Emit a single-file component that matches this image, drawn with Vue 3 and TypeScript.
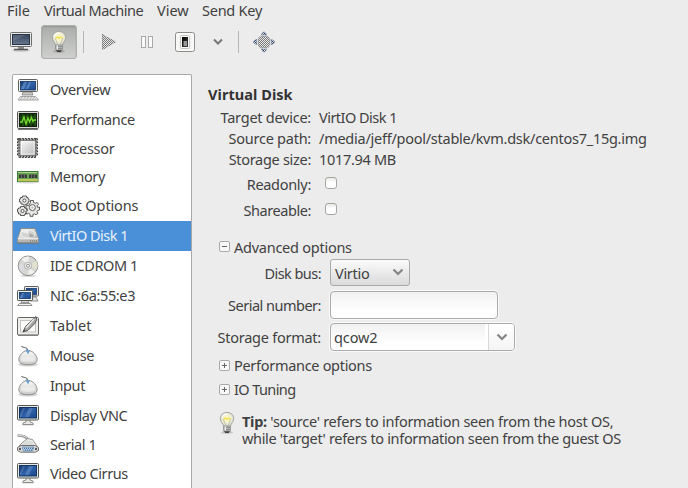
<script setup lang="ts">
import { ref } from 'vue'

interface Device {
  label: string
  icon: string
  height: number
  track: number
}

const menus = [
  { label: 'File', cls: 'file' },
  { label: 'Virtual Machine', cls: 'machine' },
  { label: 'View', cls: 'view' },
  { label: 'Send Key', cls: 'send' },
]

const devices: Device[] = [
  { label: 'Overview', icon: 'computer', height: 30, track: -0.37 },
  { label: 'Performance', icon: 'graph', height: 29, track: -0.32 },
  { label: 'Processor', icon: 'cpu', height: 29, track: -0.3 },
  { label: 'Memory', icon: 'memory', height: 28, track: -0.33 },
  { label: 'Boot Options', icon: 'gears', height: 30, track: -0.12 },
  { label: 'VirtIO Disk 1', icon: 'disk', height: 30, track: -0.52 },
  { label: 'IDE CDROM 1', icon: 'cd', height: 30, track: -0.43 },
  { label: 'NIC :6a:55:e3', icon: 'nic', height: 30, track: -0.38 },
  { label: 'Tablet', icon: 'tablet', height: 30, track: 0.08 },
  { label: 'Mouse', icon: 'mouse', height: 30, track: -0.4 },
  { label: 'Input', icon: 'mouse', height: 30, track: -0.4 },
  { label: 'Display VNC', icon: 'display', height: 29, track: -0.45 },
  { label: 'Serial 1', icon: 'serial', height: 29, track: -0.44 },
  { label: 'Video Cirrus', icon: 'display', height: 30, track: -0.42 },
]

const selected = ref(5)
const readonlyDisk = ref(false)
const shareable = ref(false)
const serial = ref('')
const teeth = [4, 7, 10, 13, 16, 19]
const memoryPins = [3, 5, 7, 9, 11, 13, 15, 17, 19, 21]
</script>

<template>
  <div class="window">
    <svg class="defs" width="0" height="0">
      <defs>
        <linearGradient id="screenBlue" x1="0" y1="0" x2="1" y2="1">
          <stop offset="0" stop-color="#12386f" /><stop offset=".5" stop-color="#2f62ab" /><stop offset="1" stop-color="#1a4687" />
        </linearGradient>
        <linearGradient id="screenDark" x1="0" y1="0" x2="0" y2="1">
          <stop offset="0" stop-color="#35435a" /><stop offset="1" stop-color="#68788f" />
        </linearGradient>
        <linearGradient id="silver" x1="0" y1="0" x2="1" y2="1">
          <stop offset="0" stop-color="#fafafa" /><stop offset="1" stop-color="#b9b9b9" />
        </linearGradient>
        <linearGradient id="metal" x1="0" y1="0" x2="0" y2="1">
          <stop offset="0" stop-color="#fbfbfb" /><stop offset="1" stop-color="#c8c8c6" />
        </linearGradient>
        <linearGradient id="slot" x1="0" y1="0" x2="1" y2="1">
          <stop offset="0" stop-color="#000" /><stop offset="1" stop-color="#444" />
        </linearGradient>
        <radialGradient id="glow" cx=".5" cy=".45" r=".5">
          <stop offset="0" stop-color="#fffbb0" /><stop offset=".55" stop-color="#f4f3d4" /><stop offset="1" stop-color="#d9dad6" />
        </radialGradient>
        <pattern id="dither" width="2" height="2" patternUnits="userSpaceOnUse">
          <rect width="1" height="1" fill="#777" /><rect x="1" y="1" width="1" height="1" fill="#777" />
        </pattern>
        <pattern id="ditherBlue" width="2" height="2" patternUnits="userSpaceOnUse">
          <rect width="1" height="1" fill="#23395c" /><rect x="1" y="1" width="1" height="1" fill="#23395c" />
        </pattern>
        <symbol id="bulb" viewBox="0 0 18 24">
          <ellipse cx="9" cy="21.4" rx="6" ry="1.6" fill="#000" opacity=".16" />
          <path d="M9 1.4c4.100 0 6.700 2.800 6.700 6.200 0 3.200-2.700 4.700-3.300 7.700H5.600C5 12.300 2.300 10.800 2.300 7.600c0-3.400 2.600-6.200 6.700-6.200z" fill="url(#glow)" stroke="#a3a5a0" stroke-width="1" />
          <path d="M7.700 14 5.400 8.500l1.800-1.300 1.800 1.100 1.800-1.100 1.800 1.300-2.300 5.500" fill="none" stroke="#bbb897" stroke-width=".8" />
          <path d="M5.500 8.100 7.300 7.100 9 8.200l1.700-1.100 1.800 1" fill="none" stroke="#f4e25a" stroke-width="1.500" />
          <path d="M4.300 6.300C5 4 6.700 3 9 3" fill="none" stroke="#fff" stroke-width="1.200" />
          <rect x="5.500" y="15" width="7" height="5" rx=".8" fill="#b9bbb8" stroke="#898b87" stroke-width=".8" />
          <path d="M6 16.600h6M6 18.600h6" stroke="#777" stroke-width=".7" />
          <path d="M7.300 15.500v4" stroke="#f8f8f8" stroke-width="1.300" />
          <path d="M6 20.200h6l-1.300 1.900H7.300z" fill="#3d3f3e" />
        </symbol>
      </defs>
    </svg>

    <nav class="menubar">
      <span v-for="m in menus" :key="m.label" :class="['menu', m.cls]">{{ m.label }}</span>
    </nav>

    <div class="toolbar">
      <button class="tool console" aria-label="Console">
        <svg width="24" height="22" viewBox="0 0 24 22">
          <ellipse cx="12" cy="19.500" rx="9" ry="1.400" fill="#000" opacity=".14" />
          <rect x="1.500" y="1.500" width="21" height="14" rx="1" fill="#e9e9e7" stroke="#6b6e6b" />
          <rect x="3.500" y="3.500" width="17" height="10" fill="url(#screenDark)" stroke="#283346" />
          <path d="M4 4h13L4 10z" fill="#fff" opacity=".15" />
          <path d="M9 16h6v2H9z" fill="#8a8c88" />
          <path d="M5.500 18.500h13" stroke="#555753" stroke-width="1.400" stroke-linecap="round" />
        </svg>
      </button>
      <button class="tool active" aria-label="Details">
        <svg width="18" height="24"><use href="#bulb" /></svg>
      </button>
      <i class="separator first"></i>
      <button class="tool play" aria-label="Run">
        <svg width="16" height="18" viewBox="0 0 16 18" shape-rendering="crispEdges">
          <path d="M1 1 15 9 1 17z" fill="url(#dither)" />
          <path d="M1.500 1.500v15L14.500 9z" fill="none" stroke="#888" stroke-width=".7" opacity=".65" shape-rendering="auto" />
        </svg>
      </button>
      <button class="tool pause" aria-label="Pause">
        <svg width="14" height="14" viewBox="0 0 14 14">
          <rect x="1.500" y="1.500" width="4" height="11" fill="#fafafa" stroke="#a8aaa7" />
          <rect x="8.500" y="1.500" width="4" height="11" fill="#fafafa" stroke="#a8aaa7" />
        </svg>
      </button>
      <button class="tool power" aria-label="Shut down">
        <svg width="22" height="22" viewBox="0 0 22 22">
          <rect x="1.500" y="1.500" width="19" height="19" rx="2" fill="#f4f4f3" stroke="#8c8e8a" />
          <rect x="3" y="3" width="16" height="16" rx="1" fill="none" stroke="#fff" />
          <rect x="6.500" y="4.500" width="9" height="13" rx="1" fill="#f8f8f8" stroke="#c4c5c3" />
          <rect x="8" y="6" width="6" height="10" fill="url(#slot)" />
          <rect x="9.500" y="10" width="3.500" height="5" fill="#999" />
        </svg>
      </button>
      <button class="tool drop" aria-label="Shut down options">
        <svg width="10" height="8" viewBox="0 0 10 8"><path d="m1 1.500 4 4 4-4" fill="none" stroke="#777" stroke-width="2" /></svg>
      </button>
      <i class="separator second"></i>
      <button class="tool full" aria-label="Fullscreen">
        <svg width="24" height="22" viewBox="0 0 24 22">
          <rect x="6" y="5" width="12" height="12" rx="4" fill="url(#dither)" />
          <rect x="6.500" y="5.500" width="11" height="11" rx="3.500" fill="none" stroke="#999" stroke-width=".6" />
          <g fill="url(#ditherBlue)" stroke="#6f7f98" stroke-width=".7">
            <path d="M9.500 4.200Q9.300 2.500 12 .800q2.700 1.700 2.500 3.400-2.500-1-5 0z" />
            <path d="M9.500 17.800q-.2 1.700 2.500 3.400 2.700-1.700 2.500-3.400-2.500 1-5 0z" />
            <path d="M5 8.500Q3 8.300 1.200 11q1.800 2.700 3.800 2.500-1-2.500 0-5z" />
            <path d="M19 8.500q2-.2 3.800 2.500-1.800 2.700-3.800 2.500 1-2.500 0-5z" />
          </g>
        </svg>
      </button>
    </div>

    <div class="body">
      <ul class="devices">
        <li
          v-for="(d, i) in devices"
          :key="d.label"
          :class="{ selected: i === selected }"
          :style="{ height: d.height + 'px' }"
          @click="selected = i"
        >
          <svg class="icon" width="24" height="24" viewBox="0 0 24 24">
            <g v-if="d.icon === 'computer'">
              <path d="M7 14h9l1 3H6z" fill="#c9cac7" stroke="#737571" stroke-width=".7" />
              <rect x="2.500" y="1.500" width="19" height="12" rx="1" fill="#efefed" stroke="#60625f" />
              <rect x="4.500" y="3.500" width="15" height="8.500" fill="url(#screenBlue)" stroke="#123462" stroke-width=".8" />
              <path d="M8 4h3l-3 7H5zM13 4h2l-3 7h-2z" fill="#9bbde5" opacity=".4" />
              <path d="M4.500 18.500h15l3 3.500H2z" fill="#f3f3f2" stroke="#8c8e8b" stroke-width=".8" />
              <path d="M5 19.800h14M4 21h16" stroke="#9b9c99" stroke-width=".7" stroke-dasharray="2 1" />
            </g>
            <g v-else-if="d.icon === 'graph'">
              <path d="M2 21.500h20" stroke="#777" stroke-width="1" />
              <rect x="1.500" y="3.500" width="21" height="17" rx="1" fill="#d8d9d6" stroke="#555753" />
              <rect x="3.500" y="5.500" width="17" height="13" fill="#102d09" stroke="#141c12" />
              <path d="M4 9h16M4 12h16M4 15h16M7 6v12M11 6v12M15 6v12M19 6v12" stroke="#2f6e1d" stroke-width=".8" />
              <path d="M4 14h2l2-5 2 7 2-6 1.500 4 2-4.500 1.500 4 1-1.500h2" fill="none" stroke="#76dc2e" stroke-width="1.300" />
            </g>
            <g v-else-if="d.icon === 'cpu'">
              <g fill="none" stroke="#3e403d" stroke-width="1">
                <path v-for="t in teeth" :key="'v' + t" :d="`M${t - 1} 4V1.500h1.500V4M${t - 1} 18v2.500h1.500V18`" />
                <path v-for="t in teeth" :key="'h' + t" :d="`M4.500 ${t - 1}H1.500v-1.300h3M19 ${t - 1}h2.500v-1.300H19`" />
              </g>
              <rect x="4" y="3.500" width="15.500" height="15" rx=".7" fill="url(#silver)" stroke="#70726f" stroke-width=".8" />
              <rect x="5.500" y="5" width="12.500" height="12" fill="none" stroke="#fff" stroke-width=".6" />
            </g>
            <g v-else-if="d.icon === 'memory'">
              <ellipse cx="12" cy="17.500" rx="11" ry="1" fill="#000" opacity=".15" />
              <rect x="1.500" y="6.500" width="20.500" height="10" fill="#6aa456" stroke="#3d7a38" />
              <path d="M2 7.500h19" stroke="#a5cf8d" />
              <path d="M3 9.500h8v3.500H3zM13 9.500h8v3.500h-8z" fill="#3b3d3b" />
              <path d="M5.500 9.500V13M8.500 9.500V13M15.500 9.500V13M18.500 9.500V13" stroke="#767976" stroke-width=".7" />
              <path v-for="p in memoryPins" :key="p" :d="`M${p} 14v2.500`" stroke="#f6df62" stroke-width="1.200" />
            </g>
            <g v-else-if="d.icon === 'gears'">
              <g fill="#e8e8e6" stroke="#484a48" stroke-width=".9">
                <path d="M4.500 3.500h2V2h4v1.500h1.500V5h1v3h-1v2h-2v1h-3v-1h-2V8H3.500V5h1z" />
                <path d="M2.500 14h2v-1.500h4V14h1.500v1h1v4h-1.500v1.500h-1v1h-4v-1.500h-2V18h-1v-3h1z" />
                <path d="M14.500 8.500V6.500h3v2l2 .800 1.500-1 1.500 2-1.500 1.500.500 1.500 2-.300v3l-2 .500-.500 1 1 1.800-2 1.500-1.600-1-1.400.500v2h-3v-2l-1.500-1-1.800.8-1-2.500 1.700-1-.2-2-1.700-1.200 1-2 2 .4z" />
              </g>
              <circle v-for="(c, n) in [[8.400, 6.500, 1.600], [6.500, 17, 1.600], [16.400, 13.600, 3]]" :key="n" :cx="c[0]" :cy="c[1]" :r="c[2]" fill="#fff" stroke="#555" stroke-width="1" />
              <circle cx="16.400" cy="13.600" r="1.200" fill="#b5b5b3" />
            </g>
            <g v-else-if="d.icon === 'disk'">
              <path d="M5 4.500h14l3.500 10v4.500h-21v-4.500z" fill="#dededc" stroke="#888a86" stroke-width=".9" />
              <path d="M5.800 5.300h12.500l3 9H2.700z" fill="url(#silver)" />
              <ellipse cx="12" cy="10" rx="7.200" ry="4" fill="#d3d4d2" stroke="#efefef" stroke-width=".9" />
              <path d="M12 10 6 8q3-2.500 7-2z" fill="#f4f4f4" opacity=".8" />
              <path d="m13 9.500 5 1.500-1 2-3 .5" fill="#a8aaa8" />
              <path d="M1.900 14.800h20.200v3.900H1.900z" fill="#b4b5b3" />
              <path d="M2 14.800h20" stroke="#f6f6f5" />
              <path d="M14 17h7" stroke="#7b7d7a" stroke-width="1.600" stroke-dasharray="1 1" />
              <path d="M1.500 19h21" stroke="#6b6d69" />
            </g>
            <g v-else-if="d.icon === 'cd'">
              <ellipse cx="12" cy="21.800" rx="8" ry="1.300" fill="#000" opacity=".15" />
              <circle cx="12" cy="11.800" r="9.800" fill="#d6d7d4" stroke="#868884" stroke-width=".9" />
              <path d="M12 11.800 5.500 5A9 9 0 0 1 13 2.500zM12 11.800l6.500 6.500a9 9 0 0 1-6 2.500z" fill="#f0f0ee" />
              <path d="M12 11.800 20.500 7a9 9 0 0 1 .3 8z" fill="#e2e1cf" />
              <path d="M12 11.800 3 10a9 9 0 0 0 2 7.500z" fill="#dcdbe2" />
              <circle cx="12" cy="11.800" r="3.600" fill="#ededeb" stroke="#a1a39f" stroke-width=".8" />
              <circle cx="12" cy="11.800" r="1.500" fill="#fff" stroke="#858783" stroke-width=".9" />
            </g>
            <g v-else-if="d.icon === 'nic'">
              <path d="M15 13h5l2 4h-8z" fill="#e3e4e1" stroke="#777" stroke-width=".8" />
              <rect x="8.500" y="2.500" width="14" height="9.500" rx=".7" fill="#eee" stroke="#5b5d5a" />
              <rect x="10.500" y="4.500" width="10" height="6" fill="url(#screenBlue)" stroke="#14386b" stroke-width=".8" />
              <path d="M6 16h6l1 2.500H5z" fill="#d4d5d2" stroke="#777" stroke-width=".7" />
              <rect x="1.500" y="6.500" width="15" height="10" rx=".7" fill="#f0f0ee" stroke="#555753" />
              <rect x="3.500" y="8.500" width="11" height="6" fill="url(#screenBlue)" stroke="#14386b" stroke-width=".8" />
              <path d="M6 9h2l-2 5H4z" fill="#8fb1dd" opacity=".5" />
              <path d="M3.500 19.500h11l1.500 2H1.500z" fill="#f3f3f2" stroke="#777975" stroke-width=".8" />
            </g>
            <g v-else-if="d.icon === 'tablet'">
              <rect x="1.500" y="3.500" width="21" height="17.500" rx="1" fill="#eeeeec" stroke="#646662" />
              <rect x="4.500" y="6.500" width="15" height="11.500" fill="#fafafa" stroke="#c3c4c1" />
              <path d="M2 21.300h20" stroke="#747672" />
              <path d="M7 18 9.500 12.500 17.500 4.500l2.500-2 .8 3-2 4-7 7z" fill="#a4a6a3" stroke="#4f514f" stroke-width=".9" />
              <path d="m10 14 8-9" stroke="#ececea" stroke-width="1.400" />
              <path d="M7 18l2-1.500-1-1z" fill="#222" />
            </g>
            <g v-else-if="d.icon === 'mouse'">
              <ellipse cx="12" cy="20.500" rx="10" ry="2" fill="#000" opacity=".16" />
              <path d="M5.500 2c1.500 2.500 5.500.500 6 3.500v2" fill="none" stroke="#767874" stroke-width="1.200" />
              <path d="M12 6.500c4 0 6.500 2.500 8.300 5.700 1.700 3.500.7 6.400-2.300 7.700-3 1.200-9 1.200-12 0-3-1.300-4-4.200-2.300-7.700C5.500 9 8 6.500 12 6.500z" fill="url(#metal)" stroke="#858783" stroke-width=".9" />
              <path d="M3.500 14.500c5-2.500 12-2.500 17 0" fill="none" stroke="#c4c5c1" stroke-width=".7" />
              <path d="M5 13.300c4-2 10-2 14 0 .8 3-1 4.600-7 4.600S4.200 16.300 5 13.300z" fill="#fff" opacity=".45" />
              <path d="M10 5.500 12 8.700l1.500-2.700" fill="none" stroke="#6b9fd4" stroke-width="1.500" />
            </g>
            <g v-else-if="d.icon === 'display'">
              <ellipse cx="12" cy="20.700" rx="7" ry="1" fill="#000" opacity=".13" />
              <path d="M10 15h4v3l3 1v1.500H7V19l3-1z" fill="#e8e9e6" stroke="#777975" stroke-width=".8" />
              <rect x="1.500" y="1.500" width="21" height="14.500" rx="1" fill="#e8e9e6" stroke="#555753" />
              <rect x="3.500" y="3.500" width="17" height="10.500" fill="url(#screenBlue)" stroke="#123462" />
              <path d="M13 4h4l-4 9H9zM7 4h2l-4 9H4v-2z" fill="#aac8ea" opacity=".25" />
            </g>
            <g v-else>
              <path d="M1.500 2.500c6 0 8 1 11.500 5" fill="none" stroke="#969895" stroke-width="2.500" />
              <path d="M1.500 2.300c6 0 8 1 11.500 5" fill="none" stroke="#e4e4e2" stroke-width="1" />
              <path d="m7 9 4.500-3.500 5 1L21 13v4H3v-4z" fill="#ededeb" stroke="#777975" stroke-width=".8" />
              <path d="m7 10 4-2.500 5 1 2.500 3.500H5z" fill="#dcdddb" />
              <path d="M5 12.500h14l3.500 2v3l-3 1.700H4.500l-3-1.700v-3z" fill="#e0e1de" stroke="#60625f" stroke-width=".9" />
              <path d="M6 14h12l-1.500 4h-9z" fill="#b7d1ee" stroke="#597da5" stroke-width=".7" />
              <path d="M8 15.300h9M9 17h7" stroke="#315982" stroke-width="1" stroke-dasharray="1 1" />
              <circle cx="4" cy="16" r="1.200" fill="#555" /><circle cx="20" cy="16" r="1.200" fill="#555" />
            </g>
          </svg>
          <span :style="{ letterSpacing: d.track + 'px' }">{{ d.label }}</span>
        </li>
      </ul>

      <main class="details">
        <h1><span>Virtual Disk</span></h1>
        <dl class="facts">
          <dt class="t-target">Target device:</dt><dd class="v-target">VirtIO Disk 1</dd>
          <dt class="t-source">Source path:</dt><dd class="v-source">/media/jeff/pool/stable/kvm.dsk/centos7_15g.img</dd>
          <dt class="t-size">Storage size:</dt><dd class="v-size">1017.94 MB</dd>
          <dt class="t-ro">Readonly:</dt><dd><input v-model="readonlyDisk" type="checkbox" class="check" /></dd>
          <dt class="t-share">Shareable:</dt><dd><input v-model="shareable" type="checkbox" class="check" /></dd>
        </dl>

        <div class="expander advanced">
          <svg width="11" height="11" viewBox="0 0 11 11"><rect x=".5" y=".5" width="10" height="10" rx="1.500" fill="#f8f8f8" stroke="#aaa" /><path d="M3 5.500h5" stroke="#666" /></svg>
          <span class="x-adv">Advanced options</span>
        </div>
        <div class="form">
          <label class="f-bus">Disk bus:</label>
          <div class="select"><span>Virtio</span>
            <svg width="12" height="9" viewBox="0 0 12 9"><path d="m1.500 1.500 4.500 4.500 4.500-4.500" fill="none" stroke="#858585" stroke-width="2.200" /></svg>
          </div>
          <label class="f-serial">Serial number:</label>
          <input v-model="serial" class="entry" type="text" />
          <label class="f-format">Storage format:</label>
          <div class="combo"><span class="value">qcow2</span><span class="arrow">
            <svg width="12" height="9" viewBox="0 0 12 9"><path d="m1.500 1.500 4.500 4.500 4.500-4.500" fill="none" stroke="#858585" stroke-width="2.200" /></svg></span>
          </div>
        </div>
        <div class="expander">
          <svg width="11" height="11" viewBox="0 0 11 11"><rect x=".5" y=".5" width="10" height="10" rx="1.500" fill="#f8f8f8" stroke="#aaa" /><path d="M3 5.500h5M5.500 3v5" stroke="#666" /></svg>
          <span class="x-perf">Performance options</span>
        </div>
        <div class="expander">
          <svg width="11" height="11" viewBox="0 0 11 11"><rect x=".5" y=".5" width="10" height="10" rx="1.500" fill="#f8f8f8" stroke="#aaa" /><path d="M3 5.500h5M5.500 3v5" stroke="#666" /></svg>
          <span class="x-io">IO Tuning</span>
        </div>
        <div class="tip">
          <svg width="18" height="24"><use href="#bulb" /></svg>
          <div class="tip-text">
            <div class="line1"><b>Tip:</b> 'source' refers to information seen from the host OS,</div>
            <div class="line2">while 'target' refers to information seen from the guest OS</div>
          </div>
        </div>
      </main>
    </div>
  </div>
</template>

<style>
body { overflow: hidden; background: #ececec; }
</style>

<style scoped>
.window { width: 688px; height: 488px; overflow: hidden; display: flex; flex-direction: column; background: #ececec; color: #414141; font: 14.5px/20px "Noto Sans", "Open Sans", sans-serif; }
.defs { position: absolute; }
.menubar { height: 23px; padding-left: 7px; display: flex; flex: none; line-height: 21px; white-space: nowrap; }
.file { width: 37px; letter-spacing: -.1px; }
.machine { width: 113px; letter-spacing: -.47px; }
.view { width: 45px; }
.send { letter-spacing: -.25px; }
.toolbar { box-sizing: border-box; height: 51px; flex: none; display: flex; align-items: flex-start; padding-top: 2px; }
.tool { box-sizing: border-box; height: 34px; padding: 0; border: 0; background: none; display: flex; align-items: center; justify-content: center; }
.console { width: 41px; }
.active { width: 36px; border: 1px solid #aeb0ad; border-radius: 3px; background: linear-gradient(#a9aca8, #cfd0ce); box-shadow: inset 0 1px 2px rgba(0, 0, 0, .14); }
.separator { width: 1px; height: 22px; margin-top: 6px; background: #b5b5b5; }
.first { margin-left: 6px; }
.play { width: 48px; padding-left: 2px; }
.pause { width: 30px; }
.power { width: 46px; }
.drop { width: 19px; }
.second { margin-left: 11px; }
.full { width: 50px; }
.body { display: flex; flex: 1; min-height: 0; padding-left: 12px; }
.devices { box-sizing: border-box; flex: none; width: 180px; margin: 0; padding: 0; list-style: none; background: #fff; border: 1px solid #a9a9a9; border-bottom: 0; overflow: hidden; border-radius: 2px 2px 0 0; }
.devices li { display: flex; align-items: center; padding-left: 3px; white-space: nowrap; }
.devices li span { margin-left: 10px; padding-bottom: 2px; }
.devices .selected { background: #4a90d9; color: #e9f1fa; }
.icon { flex: none; }
.details { margin-left: 16px; padding-top: 9px; white-space: nowrap; }
h1 { margin: 0; font-size: 14.5px; line-height: 22px; height: 23px; letter-spacing: .06px; color: #333; }
.facts { display: grid; grid-template-columns: 103px auto; column-gap: 8px; grid-template-rows: 21px 21px 22px 27px 26px; margin: 0; align-items: center; }
.facts dt { text-align: right; }
.facts dd { margin: 0; display: flex; }
.t-target, .t-source { letter-spacing: -.25px; }
.t-size, .t-ro, .v-size { letter-spacing: -.3px; }
.t-share { letter-spacing: -.42px; }
.v-target { letter-spacing: -.52px; }
.v-source { letter-spacing: -.255px; }
.check { appearance: none; box-sizing: border-box; width: 12px; height: 12px; margin: 0 0 2px 6px; border: 1px solid #a6a6a1; border-radius: 3px; background: linear-gradient(#e8e8e4, #fff 45%); }
.expander { display: flex; align-items: center; gap: 4px; height: 24px; padding-left: 11px; }
.advanced { margin-top: 12px; height: 23px; }
.x-adv { letter-spacing: -.25px; }
.x-perf { letter-spacing: -.3px; }
.x-io { letter-spacing: -.6px; }
.form { display: grid; grid-template-columns: 113px auto; column-gap: 9px; row-gap: 4px; grid-auto-rows: 28px; align-items: center; justify-items: start; margin: 1px 0 2px; }
.form label { justify-self: end; padding-bottom: 1px; }
.f-bus { letter-spacing: -.55px; }
.f-serial { letter-spacing: -.5px; }
.f-format { letter-spacing: -.25px; }
.select { box-sizing: border-box; align-self: start; width: 80px; height: 27px; border: 1px solid #aaa; border-radius: 3px; display: flex; align-items: center; justify-content: space-between; padding: 0 5px 0 4px; background: linear-gradient(#fbfbfb, #dadada); letter-spacing: -.3px; }
.entry, .combo { box-sizing: border-box; height: 28px; border: 1px solid #aaa; border-radius: 4px; background: linear-gradient(#f1f1f1, #fff 75%); box-shadow: 0 0 0 1px #fafafa; }
.entry { width: 168px; }
.combo { width: 185px; display: flex; align-items: center; }
.value { flex: 1; padding: 0 0 1px 3px; letter-spacing: -.1px; }
.arrow { box-sizing: border-box; width: 26px; height: 26px; border-left: 1px solid #d8d8d8; box-shadow: -3px 0 0 #fff; display: flex; align-items: center; justify-content: center; background: linear-gradient(#fff, #f4f4f4); border-radius: 0 3px 3px 0; }
.tip { display: flex; gap: 6px; padding-left: 10px; margin-top: 10px; }
.tip-text { margin-top: 2px; line-height: 17px; }
.line1 { letter-spacing: -.27px; }
.line2 { letter-spacing: -.33px; }
</style>
